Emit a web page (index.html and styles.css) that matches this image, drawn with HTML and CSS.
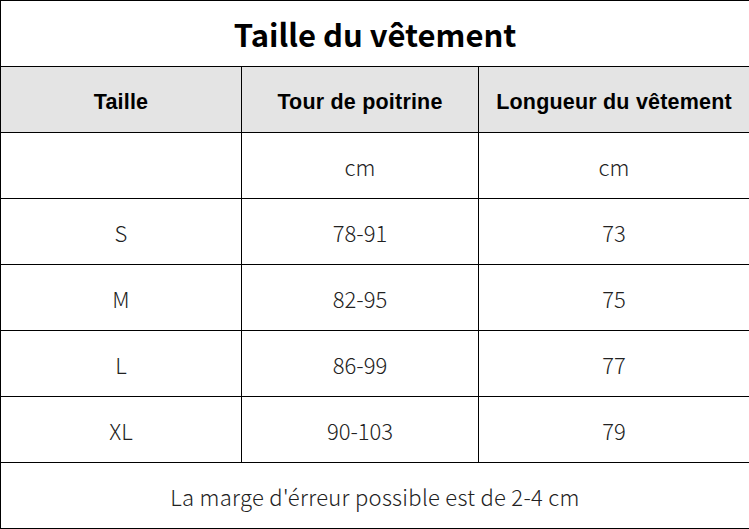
FILE: index.html
```html
<!DOCTYPE html>
<html>
<head>
<meta charset="utf-8">
<link rel="stylesheet" href="styles.css">
</head>
<body>
<table class="size-table">
  <colgroup>
    <col class="c1"><col class="c2"><col class="c3">
  </colgroup>
  <tr class="title-row"><td colspan="3">Taille du vêtement</td></tr>
  <tr class="head-row"><th>Taille</th><th>Tour de poitrine</th><th>Longueur du vêtement</th></tr>
  <tr><td></td><td>cm</td><td>cm</td></tr>
  <tr><td>S</td><td>78-91</td><td>73</td></tr>
  <tr><td>M</td><td>82-95</td><td>75</td></tr>
  <tr><td>L</td><td>86-99</td><td>77</td></tr>
  <tr><td>XL</td><td>90-103</td><td>79</td></tr>
  <tr class="foot-row"><td colspan="3">La marge d'érreur possible est de 2-4 cm</td></tr>
</table>
</body>
</html>
```
FILE: styles.css
```css
html, body {
  margin: 0;
  padding: 0;
  background: #fff;
}
.size-table {
  border-collapse: collapse;
  width: 749px;
  table-layout: fixed;
  font-family: "Noto Sans CJK SC", "Noto Sans", sans-serif;
  color: #222;
}
.c1 { width: 241px; }
.c2 { width: 237px; }
.c3 { width: 271px; }
.size-table td, .size-table th {
  border: 1px solid #000;
  text-align: center;
  vertical-align: middle;
  padding: 0;
  height: 65px;
  font-size: 22px;
  font-weight: 300;
}
.title-row td {
  font-size: 31px;
  font-weight: 700;
  color: #000;
}
.head-row th {
  background: #e4e4e4;
  font-family: "Liberation Sans", Arial, sans-serif;
  font-weight: 700;
  font-size: 21.5px;
  letter-spacing: 0.2px;
  color: #000;
  height: 59px;
  padding-top: 6px;
}
.foot-row td {
  letter-spacing: 0.3px;
}
```
